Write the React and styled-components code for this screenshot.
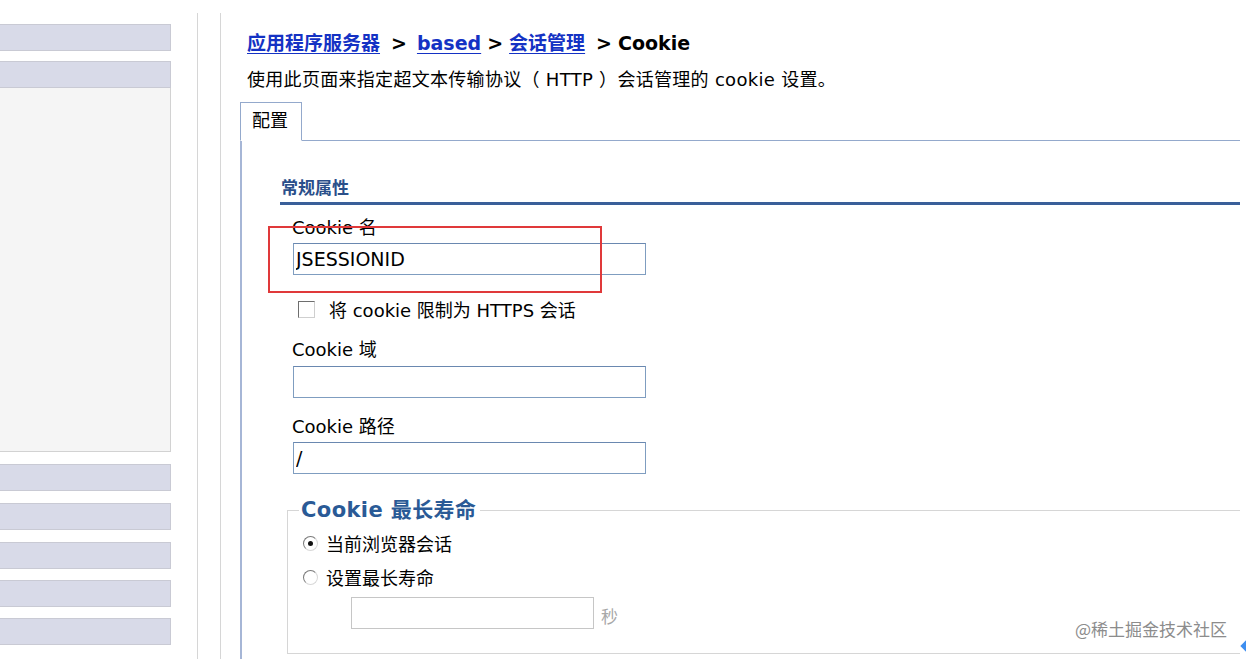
import React from 'react';
import styled, { createGlobalStyle } from 'styled-components';

const GlobalStyle = createGlobalStyle`
    html, body {
        margin: 0;
        padding: 0;
        background: #ffffff;
    }
    body {
        font-family: "DejaVu Sans", "Noto Sans CJK SC", sans-serif;
        color: #000;
    }
`;

const Page = styled.div`
    position: relative;
    display: flex;
    width: 1246px;
    height: 659px;
    overflow: hidden;
`;

// left navigation column
const Sidebar = styled.div`
    width: 171px;
    flex-shrink: 0;
    padding-top: 24px;
    display: flex;
    flex-direction: column;
`;

const NavBar = styled.div`
    height: 25px;
    background: #d8dae8;
    border: 1px solid #c9cad4;
    border-left: none;
    margin-bottom: ${(p) => p.gap || 12}px;
`;

const NavPanel = styled.div`
    height: 363px;
    background: #f5f5f5;
    border-right: 1px solid #d2d2d2;
    border-bottom: 1px solid #d2d2d2;
    margin-top: -12px;
    margin-bottom: 12px;
`;

const Divider = styled.div`
    width: 22px;
    flex-shrink: 0;
    margin-left: 26px;
    margin-top: 13px;
    border-left: 1px solid #d6d6d6;
    border-right: 1px solid #d6d6d6;
`;

const Main = styled.div`
    flex: 1;
    margin-left: 19px;
    padding-right: 6px;
    display: flex;
    flex-direction: column;
`;

const Header = styled.div`
    padding: 31px 0 0 7px;
`;

const Crumbs = styled.div`
    font-size: 19px;
    font-weight: bold;
    line-height: 24px;
    white-space: nowrap;
`;

const CrumbLink = styled.a`
    color: #1432c4;
    text-decoration: underline;
    text-underline-offset: 3px;
`;

const Sep = styled.span`
    margin: 0 ${(p) => p.r || 6}px 0 ${(p) => p.l || 10}px;
`;

const Description = styled.div`
    margin-top: 13px;
    font-size: 18px;
    line-height: 24px;
    letter-spacing: 0.3px;
    white-space: nowrap;
`;

const TabRow = styled.div`
    margin-top: 10px;
    display: flex;
    border-bottom: 1px solid #94a9cc;
`;

const Tab = styled.div`
    height: 37px;
    padding: 0 13px 0 11px;
    border: 1px solid #94a9cc;
    border-bottom: 1px solid #fff;
    margin-bottom: -1px;
    background: #fff;
    font-size: 18px;
    line-height: 36px;
`;

const Panel = styled.div`
    flex: 1;
    border-left: 2px solid #a6b6d6;
    padding: 36px 0 0 38px;
`;

const SectionTitle = styled.div`
    color: #2a4f8a;
    font-size: 17px;
    font-weight: bold;
    line-height: 22px;
    padding: 0 0 3px 1px;
    border-bottom: 3px solid #3a5f99;
`;

const Fields = styled.div`
    padding: 11px 0 0 12px;
`;

const Label = styled.div`
    font-size: 18px;
    line-height: 24px;
    margin-top: ${(p) => p.top || 0}px;
`;

const TextInput = styled.input`
    display: block;
    box-sizing: border-box;
    width: 353px;
    height: 32px;
    margin: ${(p) => p.top || 3}px 0 0 1px;
    padding: 0 2px;
    border: 1px solid #7f9dc0;
    border-top-color: #6a88b0;
    font-family: "DejaVu Sans", sans-serif;
    font-size: 19px;
    color: #000;
    background: #fff;
    outline: none;
`;

const CheckRow = styled.label`
    display: flex;
    align-items: center;
    margin: 22px 0 0 6px;
    height: 24px;
    font-size: 18px;
`;

const Check = styled.span`
    width: 15px;
    height: 15px;
    border: 1px solid #6e6e6e;
    border-right-color: #cfcfcf;
    border-bottom-color: #cfcfcf;
    background: #fff;
    margin-right: 14px;
`;

const Fieldset = styled.fieldset`
    margin: 24px 0 0 7px;
    padding: 0 0 0 15px;
    height: 154px;
    border: 1px solid #d6d6d6;
    border-right: none;
`;

const Legend = styled.legend`
    padding: 0 4px 0 2px;
    margin-left: -4px;
    color: #2a5a96;
    font-size: 21px;
    font-weight: bold;
    line-height: 24px;
    letter-spacing: 0.4px;
`;

const RadioRow = styled.label`
    display: flex;
    align-items: center;
    height: 24px;
    margin-top: ${(p) => p.top || 0}px;
    font-size: 18px;
`;

const Radio = styled.span`
    position: relative;
    width: 13px;
    height: 13px;
    border-radius: 50%;
    border: 1px solid #7a7a7a;
    border-right-color: #d8d8d8;
    border-bottom-color: #d8d8d8;
    background: #fff;
    margin-right: 8px;
    &::after {
        content: '';
        display: ${(p) => (p.checked ? 'block' : 'none')};
        position: absolute;
        left: 4px;
        top: 4px;
        width: 5px;
        height: 5px;
        border-radius: 50%;
        background: #111;
    }
`;

const DurationRow = styled.div`
    display: flex;
    align-items: center;
    margin: 8px 0 0 48px;
`;

const DisabledInput = styled.input`
    box-sizing: border-box;
    width: 243px;
    height: 32px;
    border: 1px solid #c6c6c6;
    background: #fff;
    margin: 0 7px 0 0;
`;

const Unit = styled.span`
    color: #a8a8a8;
    font-size: 17px;
    margin-top: 4px;
`;

const Annotation = styled.div`
    position: absolute;
    left: 268px;
    top: 226px;
    width: 330px;
    height: 63px;
    border: 2px solid #e0393a;
    pointer-events: none;
`;

const Watermark = styled.div`
    position: absolute;
    right: 19px;
    top: 617px;
    color: #8c8c8c;
    font-family: "Noto Sans CJK SC", sans-serif;
    font-size: 17px;
    line-height: 24px;
`;

const Marker = styled.div`
    position: absolute;
    right: -4px;
    top: 642px;
    width: 8px;
    height: 8px;
    background: #3d8ef0;
    transform: rotate(45deg);
`;

const App = () => {
    return (
        <Page>
            <GlobalStyle />
            <Sidebar>
                <NavBar gap={10} />
                <NavBar />
                <NavPanel />
                <NavBar />
                <NavBar />
                <NavBar gap={11} />
                <NavBar gap={11} />
                <NavBar />
            </Sidebar>
            <Divider />
            <Main>
                <Header>
                    <Crumbs>
                        <CrumbLink href="#">应用程序服务器</CrumbLink>
                        <Sep l={11} r={10}>&gt;</Sep>
                        <CrumbLink href="#">based</CrumbLink>
                        <Sep l={6} r={6}>&gt;</Sep>
                        <CrumbLink href="#">会话管理</CrumbLink>
                        <Sep l={11} r={6}>&gt;</Sep>
                        <span>Cookie</span>
                    </Crumbs>
                    <Description>使用此页面来指定超文本传输协议（ HTTP ）会话管理的 cookie 设置。</Description>
                </Header>
                <TabRow>
                    <Tab>配置</Tab>
                </TabRow>
                <Panel>
                    <SectionTitle>常规属性</SectionTitle>
                    <Fields>
                        <Label>Cookie 名</Label>
                        <TextInput defaultValue="JSESSIONID" />
                        <CheckRow>
                            <Check />
                            将 cookie 限制为 HTTPS 会话
                        </CheckRow>
                        <Label top={17}>Cookie 域</Label>
                        <TextInput top={4} defaultValue="" />
                        <Label top={17}>Cookie 路径</Label>
                        <TextInput defaultValue="/" />
                    </Fields>
                    <Fieldset>
                        <Legend>Cookie 最长寿命</Legend>
                        <RadioRow top={9}>
                            <Radio checked />
                            当前浏览器会话
                        </RadioRow>
                        <RadioRow top={10}>
                            <Radio />
                            设置最长寿命
                        </RadioRow>
                        <DurationRow>
                            <DisabledInput disabled />
                            <Unit>秒</Unit>
                        </DurationRow>
                    </Fieldset>
                </Panel>
            </Main>
            <Annotation />
            <Watermark>@稀土掘金技术社区</Watermark>
            <Marker />
        </Page>
    );
};

export default App;
